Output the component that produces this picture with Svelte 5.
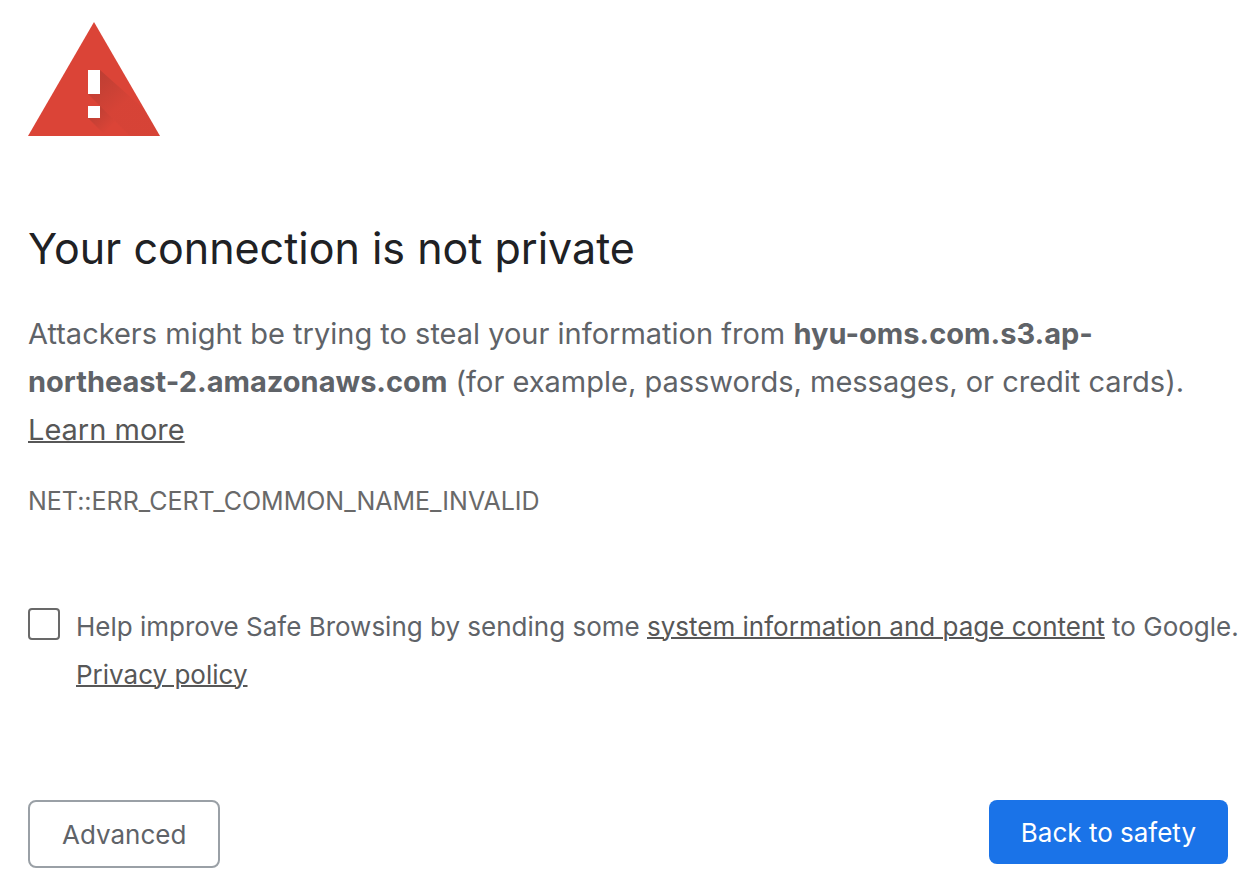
<script lang="ts">
  let reporting = $state(false);
</script>

<main>
  <svg class="icon" viewBox="0 0 132 114" role="img" aria-label="Warning">
    <defs>
      <linearGradient id="shade-top" x1="60" y1="56" x2="88" y2="88" gradientUnits="userSpaceOnUse">
        <stop offset="0" stop-color="#3e2723" stop-opacity=".2" />
        <stop offset="1" stop-color="#3e2723" stop-opacity=".03" />
      </linearGradient>
      <linearGradient id="shade-bottom" x1="64" y1="88" x2="82" y2="106" gradientUnits="userSpaceOnUse">
        <stop offset="0" stop-color="#3e2723" stop-opacity=".2" />
        <stop offset="1" stop-color="#3e2723" stop-opacity="0" />
      </linearGradient>
    </defs>
    <path d="M66 0 132 114H0Z" fill="#db4437" />
    <path d="M72 48 117 88 132 114H102L60 72H72Z" fill="url(#shade-top)" />
    <path d="M72 84 102 114H78L60 96H72Z" fill="url(#shade-bottom)" />
    <path d="M60 48H72V72H60ZM60 84H72V96H60Z" fill="#fff" />
  </svg>
  <h1>Your connection is not private</h1>
  <p class="message">
    Attackers might be trying to steal your information from <strong>hyu-oms.com.s3.ap-northeast-2.amazonaws.com</strong> (for example, passwords, messages, or credit cards). <a href="#learn">Learn more</a>
  </p>
  <p class="code">NET::ERR_CERT_COMMON_NAME_INVALID</p>
  <div class="opt-in">
    <input id="reporting" type="checkbox" bind:checked={reporting} />
    <label for="reporting">Help improve Safe Browsing by sending some <a href="#details">system information and page content</a> to Google. <a href="#privacy">Privacy policy</a></label>
  </div>
  <div class="actions">
    <button type="button" class="secondary">Advanced</button>
    <button type="button" class="primary">Back to safety</button>
  </div>
</main>

<style>
  :global(body) { margin: 0; background: #fff; }
  main {
    padding: 22px 24px 24px 28px;
    color: #5f6368;
    font-family: Inter, sans-serif;
    font-feature-settings: "calt" 0;
  }
  .icon { display: block; width: 132px; height: 114px; }
  h1 {
    margin: 84px 0 34px;
    color: #202124;
    font-size: 43px;
    font-weight: 400;
    line-height: 56px;
  }
  p { margin: 0; }
  .message { font-size: 29px; line-height: 48px; }
  a { color: #575757; text-decoration: underline; text-decoration-thickness: 2px; }
  .code { margin-top: 23px; color: #696969; font-size: 25px; line-height: 48px; }
  .opt-in { display: flex; gap: 16px; margin: 78px -20px 0 0; font-size: 26px; line-height: 48px; }
  input {
    appearance: none;
    box-sizing: border-box;
    flex: none;
    width: 32px;
    height: 32px;
    margin: 5px 0 0;
    border: 2px solid #696969;
    border-radius: 4px;
    background: #fff;
  }
  input:checked { background: #1a73e8; }
  .actions { display: flex; justify-content: space-between; align-items: flex-start; margin-top: 101px; }
  button {
    box-sizing: border-box;
    padding: 17px 32px 15px;
    border-radius: 8px;
    font: 400 26px/32px Inter, sans-serif;
    cursor: pointer;
  }
  .secondary { border: 2px solid #9aa0a6; background: #fff; color: #5f6368; }
  .primary { border: 0; background: #1a73e8; color: #fff; }
</style>
